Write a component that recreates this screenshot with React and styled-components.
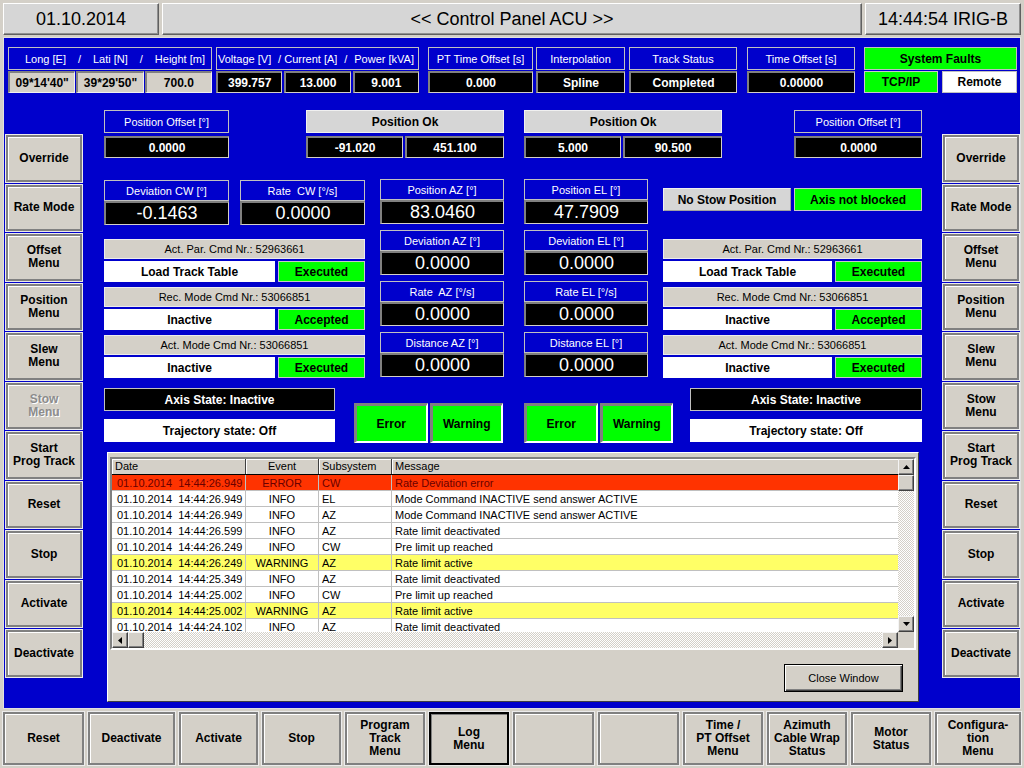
import React from 'react'
import styled, { createGlobalStyle, css } from 'styled-components'

const blue = '#0000cc'
const face = '#d4d0c8'
const green = '#00ff00'

const GlobalStyle = createGlobalStyle`
    *, *::before, *::after { box-sizing: border-box; }
    html, body { margin: 0; padding: 0; background: ${face}; }
    body { font-family: "Liberation Sans", Arial, sans-serif; }
`

const Screen = styled.div`
    width: 1024px;
    height: 768px;
    overflow: hidden;
    display: grid;
    grid-template-rows: 37px 672px 59px;
    background: ${face};
`

const TopBar = styled.div`
    display: grid;
    grid-template-columns: 156px 1fr 156px;
    column-gap: 3px;
    padding: 3px 3px 2px 3px;
`

const TopCell = styled.div`
    display: flex;
    align-items: center;
    justify-content: center;
    background: #d6d6d6;
    border: 1px solid;
    border-color: #fff #606060 #606060 #fff;
    box-shadow: inset -1px -1px #909090;
    font-size: 18px;
    color: #000;
`

const BluePanel = styled.div`
    margin: 0 3px;
    background: ${blue};
    border: 1px solid #e0e0e0;
    display: flex;
    flex-direction: column;
`

const InfoRow = styled.div`
    display: flex;
    margin-top: 9px;
    height: 46px;
`

const Readout = styled.div`
    flex-shrink: 0;
    width: ${p => p.$w}px;
    margin-left: ${p => p.$ml || 0}px;
    margin-top: ${p => p.$mt || 0}px;
    display: grid;
    grid-template-rows: ${p => p.$rows};
    row-gap: ${p => p.$gap || 0}px;
`

const Caption = styled.div`
    display: flex;
    align-items: center;
    justify-content: ${p => p.$spread ? 'space-between' : 'center'};
    padding: ${p => p.$pad || '0'};
    background: ${p => p.$bg || blue};
    color: ${p => p.$color || '#fff'};
    border: 1px solid ${p => p.$line || '#c0c0c0'};
    font-size: ${p => p.$bold ? 12 : 11}px;
    font-weight: ${p => p.$bold ? 700 : 400};
    white-space: pre;
`

const tones = {
    black: css`
        background: #000;
        color: #fff;
        border-color: #808080 #d4d0c8 #d4d0c8 #808080;
    `,
    gray: css`
        background: ${face};
        color: #000;
        border-color: #808080 #f0f0f0 #f0f0f0 #808080;
    `,
    green: css`
        background: ${green};
        color: #000;
        border-width: 1px;
        border-color: #c8c8c8;
    `,
    white: css`
        background: #fff;
        color: #000;
        border-width: 1px;
        border-color: #fff;
    `,
    light: css`
        background: #d6d6d6;
        color: #000;
        border-width: 1px;
        border-color: #f0f0f0 #a0a0a0 #a0a0a0 #f0f0f0;
    `
}

const Box = styled.div`
    display: flex;
    align-items: center;
    justify-content: center;
    border-style: solid;
    border-width: 2px 1px 1px 2px;
    font-size: ${p => p.$big ? 18 : 12}px;
    font-weight: ${p => p.$big ? 400 : 700};
    white-space: pre;
    ${p => tones[p.$tone || 'black']}
`

const Split = styled.div`
    display: grid;
    grid-template-columns: ${p => p.$cols};
    column-gap: ${p => p.$gap}px;
`

const MainArea = styled.div`
    flex: 1;
    display: flex;
    padding-left: 2px;
`

const SideColumn = styled.div`
    flex-shrink: 0;
    width: 76px;
    margin-top: 42px;
    margin-left: ${p => p.$ml || 0}px;
    display: grid;
    grid-template-rows: repeat(11, 46.5px);
    row-gap: 3px;
    align-self: flex-start;
`

const PanelButton = styled.div`
    display: flex;
    align-items: center;
    justify-content: center;
    text-align: center;
    white-space: pre-line;
    background: ${face};
    border: 2px solid ${p => p.$active ? '#000' : '#808080'};
    box-shadow: 0 0 0 1px #ececec, inset 1px 1px ${p => p.$active ? '#808080' : '#fff'};
    font-size: 12px;
    font-weight: 700;
    line-height: 13px;
    color: ${p => p.$disabled ? '#8c8c8c' : '#000'};
    text-shadow: ${p => p.$disabled ? '1px 1px #fff' : 'none'};
`

const Center = styled.div`
    flex-shrink: 0;
    width: 818px;
    margin-left: 22px;
    display: flex;
    flex-direction: column;
`

const Row = styled.div`
    display: flex;
    align-items: flex-start;
    margin-top: ${p => p.$mt}px;
`

const Block = styled.div`
    flex-shrink: 0;
    width: ${p => p.$w}px;
    margin-left: ${p => p.$ml || 0}px;
    display: flex;
    flex-direction: column;
`

const AxisGrid = styled.div`
    flex-shrink: 0;
    width: 268px;
    margin-left: 15px;
    display: grid;
    grid-template-columns: 124px 124px;
    column-gap: 20px;
    row-gap: 6px;
`

const CmdGroup = styled.div`
    display: grid;
    grid-template-rows: 20px 21px;
    row-gap: 2px;
    margin-top: ${p => p.$mt || 0}px;
`

const StateColumn = styled.div`
    flex-shrink: 0;
    width: ${p => p.$w}px;
    margin-left: ${p => p.$ml || 0}px;
    display: grid;
    grid-template-rows: 23px 23px;
    row-gap: 8px;
`

const AlarmPair = styled.div`
    flex-shrink: 0;
    width: 149px;
    height: 40px;
    margin-left: ${p => p.$ml}px;
    margin-top: 15px;
    display: grid;
    grid-template-columns: 1fr 1fr;
    column-gap: 2px;
`

const AlarmButton = styled.div`
    display: flex;
    align-items: center;
    justify-content: center;
    background: ${green};
    border-style: solid;
    border-width: 3px 2px 2px 3px;
    border-color: #808080 #fff #fff #808080;
    font-size: 12px;
    font-weight: 700;
    color: #000;
`

const LogWindow = styled.div`
    width: 812px;
    height: 250px;
    margin: 9px 0 0 3px;
    background: ${face};
    border: 1px solid;
    border-color: #fff #404040 #404040 #fff;
    display: flex;
    flex-direction: column;
`

const TableFrame = styled.div`
    height: 193px;
    margin: 4px 2px 0 2px;
    border-style: solid;
    border-width: 2px;
    border-color: #808080 #fff #fff #808080;
    display: grid;
    grid-template-columns: 1fr 16px;
    grid-template-rows: 1fr 16px;
    overflow: hidden;
`

const TableView = styled.div`
    overflow: hidden;
    background: #fff;
`

const cols = '134px 73px 73px 1fr'

const HeadRow = styled.div`
    display: grid;
    grid-template-columns: ${cols};
    height: 16px;
    border-bottom: 1px solid #000;
`

const HeadCell = styled.div`
    background: ${face};
    border-right: 1px solid #404040;
    box-shadow: inset 1px 1px #fff;
    font-size: 11px;
    line-height: 15px;
    padding-left: ${p => p.$center ? 0 : 3}px;
    text-align: ${p => p.$center ? 'center' : 'left'};
    color: #000;
`

const rowBg = { error: '#ff3300', warning: '#ffff66', info: '#fff' }

const LogRow = styled.div`
    display: grid;
    grid-template-columns: ${cols};
    height: 16px;
    background: ${p => rowBg[p.$level]};
    color: ${p => p.$level === 'error' ? '#6a0000' : '#000'};
`

const LogCell = styled.div`
    border-right: 1px solid #c0c0c0;
    border-bottom: 1px solid #c0c0c0;
    font-size: 11px;
    line-height: 16px;
    white-space: pre;
    overflow: hidden;
    padding-left: ${p => p.$center ? 0 : p.$pl || 3}px;
    text-align: ${p => p.$center ? 'center' : 'left'};
`

const ScrollBar = styled.div`
    display: flex;
    flex-direction: ${p => p.$vertical ? 'column' : 'row'};
`

const Track = styled.div`
    flex: 1;
    background: repeating-conic-gradient(${face} 0 25%, #fff 0 50%) 0 0 / 2px 2px;
`

const ScrollKnob = styled.div`
    flex-shrink: 0;
    width: 16px;
    height: 16px;
    display: flex;
    align-items: center;
    justify-content: center;
    background: ${face};
    border: 1px solid;
    border-color: #f4f4f4 #404040 #404040 #f4f4f4;
    box-shadow: inset -1px -1px #808080;
`

const Corner = styled.div`
    background: ${face};
`

const CloseButton = styled.div`
    align-self: flex-end;
    margin: auto 15px 9px 0;
    width: 119px;
    height: 28px;
    display: flex;
    align-items: center;
    justify-content: center;
    background: ${face};
    border: 1px solid #000;
    box-shadow: inset 1px 1px #fff, inset -1px -1px #404040, inset -2px -2px #808080;
    font-size: 11px;
    color: #000;
`

const BottomBar = styled.div`
    display: grid;
    grid-template-columns: 81px 87px 79px 79px 80px 80px 81px 81px 80px 80px 80px 1fr;
    column-gap: 4px;
    padding: 3px;
`

function Arrow({ dir }) {
    const pts = {
        up: '0,4 7,4 3.5,0',
        down: '0,0 7,0 3.5,4',
        left: '4,0 4,7 0,3.5',
        right: '0,0 0,7 4,3.5'
    }[dir]
    const vertical = dir === 'up' || dir === 'down'
    return (
        <svg width={vertical ? 7 : 4} height={vertical ? 4 : 7} viewBox={vertical ? '0 0 7 4' : '0 0 4 7'}>
            <polygon points={pts} fill="#000" />
        </svg>
    )
}

const sideButtons = [
    'Override', 'Rate Mode', 'Offset\nMenu', 'Position\nMenu', 'Slew\nMenu',
    'Stow\nMenu', 'Start\nProg Track', 'Reset', 'Stop', 'Activate', 'Deactivate'
]

const bottomButtons = [
    'Reset', 'Deactivate', 'Activate', 'Stop', 'Program\nTrack\nMenu', 'Log\nMenu',
    '', '', 'Time /\nPT Offset\nMenu', 'Azimuth\nCable Wrap\nStatus', 'Motor\nStatus',
    'Configura-\ntion\nMenu'
]

const axisReadouts = [
    ['Position AZ [°]', '83.0460'], ['Position EL [°]', '47.7909'],
    ['Deviation AZ [°]', '0.0000'], ['Deviation EL [°]', '0.0000'],
    ['Rate  AZ [°/s]', '0.0000'], ['Rate EL [°/s]', '0.0000'],
    ['Distance AZ [°]', '0.0000'], ['Distance EL [°]', '0.0000']
]

const commands = [
    ['Act. Par. Cmd Nr.: 52963661', 'Load Track Table', 'Executed'],
    ['Rec. Mode Cmd Nr.: 53066851', 'Inactive', 'Accepted'],
    ['Act. Mode Cmd Nr.: 53066851', 'Inactive', 'Executed']
]

const logRows = [
    ['01.10.2014  14:44:26.949', 'ERROR', 'CW', 'Rate Deviation error', 'error'],
    ['01.10.2014  14:44:26.949', 'INFO', 'EL', 'Mode Command INACTIVE send answer ACTIVE', 'info'],
    ['01.10.2014  14:44:26.949', 'INFO', 'AZ', 'Mode Command INACTIVE send answer ACTIVE', 'info'],
    ['01.10.2014  14:44:26.599', 'INFO', 'AZ', 'Rate limit deactivated', 'info'],
    ['01.10.2014  14:44:26.249', 'INFO', 'CW', 'Pre limit up reached', 'info'],
    ['01.10.2014  14:44:26.249', 'WARNING', 'AZ', 'Rate limit active', 'warning'],
    ['01.10.2014  14:44:25.349', 'INFO', 'AZ', 'Rate limit deactivated', 'info'],
    ['01.10.2014  14:44:25.002', 'INFO', 'CW', 'Pre limit up reached', 'info'],
    ['01.10.2014  14:44:25.002', 'WARNING', 'AZ', 'Rate limit active', 'warning'],
    ['01.10.2014  14:44:24.102', 'INFO', 'AZ', 'Rate limit deactivated', 'info']
]

function InfoGroup({ w, ml, title, children, cols, gap, faults, spread, pad }) {
    return (
        <Readout $w={w} $ml={ml} $rows="23px 22px" $gap={1}>
            {faults
                ? <Caption $bg={green} $color="#000" $bold>{title}</Caption>
                : <Caption $spread={spread} $pad={pad}>{title}</Caption>}
            <Split $cols={cols || '1fr'} $gap={gap || 0}>{children}</Split>
        </Readout>
    )
}

function CommandStack({ whiteCol }) {
    return commands.map(([head, mode, state], i) => (
        <CmdGroup key={head} $mt={i ? 5 : 0}>
            <Caption $bg={face} $color="#000" $line="#ececec">{head}</Caption>
            <Split $cols={`${whiteCol}px 1fr`} $gap={3}>
                <Box $tone="white">{mode}</Box>
                <Box $tone="green">{state}</Box>
            </Split>
        </CmdGroup>
    ))
}

function Side({ ml, stowEnabled }) {
    return (
        <SideColumn $ml={ml}>
            {sideButtons.map(label => (
                <PanelButton key={label} $disabled={!stowEnabled && label === 'Stow\nMenu'}>
                    {label}
                </PanelButton>
            ))}
        </SideColumn>
    )
}

function PositionOk({ ml, a, b }) {
    return (
        <Readout $w={198} $ml={ml} $rows="23px 22px" $gap={3}>
            <Caption $bg="#d6d6d6" $color="#000" $line="#f0f0f0" $bold>Position Ok</Caption>
            <Split $cols="97px 1fr" $gap={2}>
                <Box>{a}</Box>
                <Box>{b}</Box>
            </Split>
        </Readout>
    )
}

function Offset({ ml, w }) {
    return (
        <Readout $w={w} $ml={ml} $rows="23px 22px" $gap={3}>
            <Caption>Position Offset [°]</Caption>
            <Box>0.0000</Box>
        </Readout>
    )
}

function BigReadout({ label, value, w, ml }) {
    return (
        <Readout $w={w} $ml={ml} $rows="21px 24px">
            <Caption>{label}</Caption>
            <Box $big>{value}</Box>
        </Readout>
    )
}

function States() {
    return (
        <>
            <Box $tone="black" style={{ borderWidth: 1, borderColor: '#c0c0c0' }}>Axis State: Inactive</Box>
            <Box $tone="white">Trajectory state: Off</Box>
        </>
    )
}

function Alarms({ ml }) {
    return (
        <AlarmPair $ml={ml}>
            <AlarmButton>Error</AlarmButton>
            <AlarmButton>Warning</AlarmButton>
        </AlarmPair>
    )
}

function EventLog() {
    return (
        <LogWindow>
            <TableFrame>
                <TableView>
                    <HeadRow>
                        <HeadCell>Date</HeadCell>
                        <HeadCell $center>Event</HeadCell>
                        <HeadCell>Subsystem</HeadCell>
                        <HeadCell style={{ borderRight: 0 }}>Message</HeadCell>
                    </HeadRow>
                    {logRows.map(([date, event, sub, msg, level], i) => (
                        <LogRow key={i} $level={level}>
                            <LogCell $pl={5}>{date}</LogCell>
                            <LogCell $center>{event}</LogCell>
                            <LogCell>{sub}</LogCell>
                            <LogCell style={{ borderRight: 0 }}>{msg}</LogCell>
                        </LogRow>
                    ))}
                </TableView>
                <ScrollBar $vertical>
                    <ScrollKnob><Arrow dir="up" /></ScrollKnob>
                    <ScrollKnob />
                    <Track />
                    <ScrollKnob><Arrow dir="down" /></ScrollKnob>
                </ScrollBar>
                <ScrollBar>
                    <ScrollKnob><Arrow dir="left" /></ScrollKnob>
                    <ScrollKnob />
                    <Track />
                    <ScrollKnob><Arrow dir="right" /></ScrollKnob>
                </ScrollBar>
                <Corner />
            </TableFrame>
            <CloseButton>Close Window</CloseButton>
        </LogWindow>
    )
}

function App() {
    return (
        <Screen>
            <GlobalStyle />
            <TopBar>
                <TopCell>01.10.2014</TopCell>
                <TopCell>{'<< Control Panel ACU >>'}</TopCell>
                <TopCell>14:44:54 IRIG-B</TopCell>
            </TopBar>

            <BluePanel>
                <InfoRow>
                    <InfoGroup
                        w={204} ml={4} cols="1fr 1fr 1fr" gap={1} spread pad="0 6px 0 16px"
                        title={<><span>Long [E]</span><span>/</span><span>Lati [N]</span><span>/</span><span>Height [m]</span></>}>
                        <Box $tone="gray">09*14'40"</Box>
                        <Box $tone="gray">39*29'50"</Box>
                        <Box $tone="gray">700.0</Box>
                    </InfoGroup>
                    <InfoGroup
                        w={203} ml={4} cols="1fr 1fr 1fr" gap={2} spread pad="0 4px 0 1px"
                        title={<><span>Voltage [V]</span><span>/ Current [A]</span><span>/</span><span>Power [kVA]</span></>}>
                        <Box>399.757</Box>
                        <Box>13.000</Box>
                        <Box>9.001</Box>
                    </InfoGroup>
                    <InfoGroup w={105} ml={9} title="PT Time Offset [s]">
                        <Box>0.000</Box>
                    </InfoGroup>
                    <InfoGroup w={89} ml={3} title="Interpolation">
                        <Box>Spline</Box>
                    </InfoGroup>
                    <InfoGroup w={108} ml={4} title="Track Status">
                        <Box>Completed</Box>
                    </InfoGroup>
                    <InfoGroup w={108} ml={10} title="Time Offset [s]">
                        <Box>0.00000</Box>
                    </InfoGroup>
                    <InfoGroup w={153} ml={9} title="System Faults" faults cols="74px 1fr" gap={4}>
                        <Box $tone="green">TCP/IP</Box>
                        <Box $tone="white" style={{ borderColor: '#c0c0c0' }}>Remote</Box>
                    </InfoGroup>
                </InfoRow>

                <MainArea>
                    <Side />

                    <Center>
                        <Row $mt={17}>
                            <Offset w={125} />
                            <PositionOk ml={77} a="-91.020" b="451.100" />
                            <PositionOk ml={20} a="5.000" b="90.500" />
                            <Offset w={128} ml={72} />
                        </Row>

                        <Row $mt={21}>
                            <Block $w={261}>
                                <Row $mt={1}>
                                    <BigReadout w={125} label="Deviation CW [°]" value="-0.1463" />
                                    <BigReadout w={125} ml={11} label="Rate  CW [°/s]" value="0.0000" />
                                </Row>
                                <div style={{ height: 14 }} />
                                <CommandStack whiteCol={171} />
                            </Block>

                            <AxisGrid>
                                {axisReadouts.map(([label, value]) => (
                                    <BigReadout key={label} label={label} value={value} />
                                ))}
                            </AxisGrid>

                            <Block $w={259} $ml={15}>
                                <Row $mt={9}>
                                    <Split $cols="128px 128px" $gap={3} style={{ height: 23 }}>
                                        <Box $tone="light">No Stow Position</Box>
                                        <Box $tone="green">Axis not blocked</Box>
                                    </Split>
                                </Row>
                                <div style={{ height: 28 }} />
                                <CommandStack whiteCol={169} />
                            </Block>
                        </Row>

                        <Row $mt={10}>
                            <StateColumn $w={231}>
                                <States />
                            </StateColumn>
                            <Alarms ml={19} />
                            <Alarms ml={21} />
                            <StateColumn $w={232} $ml={17}>
                                <States />
                            </StateColumn>
                        </Row>

                        <EventLog />
                    </Center>

                    <Side ml={21} stowEnabled />
                </MainArea>
            </BluePanel>

            <BottomBar>
                {bottomButtons.map((label, i) => (
                    <PanelButton key={i} $active={label === 'Log\nMenu'}>{label}</PanelButton>
                ))}
            </BottomBar>
        </Screen>
    )
}

export default App
